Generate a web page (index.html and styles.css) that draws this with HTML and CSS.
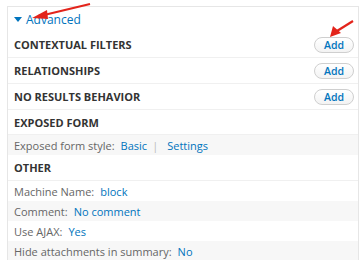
FILE: index.html
```html
<!DOCTYPE html>
<html lang="en">
<head>
  <meta charset="UTF-8" />
  <title>Views advanced</title>
  <link rel="stylesheet" href="styles.css">
</head>
<body>

  <div class="panel">
    <div class="toggle">
      <span class="tri"></span>
      <a href="#">Advanced</a>
    </div>

    <div class="bucket">
      <span>CONTEXTUAL FILTERS</span>
      <button class="add">Add</button>
    </div>
    <div class="bucket">
      <span>RELATIONSHIPS</span>
      <button class="add">Add</button>
    </div>
    <div class="bucket">
      <span>NO RESULTS BEHAVIOR</span>
      <button class="add">Add</button>
    </div>
    <div class="bucket short">
      <span>EXPOSED FORM</span>
    </div>
    <div class="row even">
      <span class="label">Exposed form style:</span><a href="#">Basic</a><span class="sep">|</span><a href="#">Settings</a>
    </div>
    <div class="bucket">
      <span>OTHER</span>
    </div>
    <div class="row"><span class="label">Machine Name:</span><a href="#">block</a></div>
    <div class="row even"><span class="label">Comment:</span><a href="#">No comment</a></div>
    <div class="row"><span class="label">Use AJAX:</span><a href="#">Yes</a></div>
    <div class="row even"><span class="label">Hide attachments in summary:</span><a href="#">No</a></div>
  </div>

  <svg class="arrows" width="364" height="260" viewBox="0 0 364 260">
    <line x1="90" y1="4" x2="44" y2="15" stroke="#e3241b" stroke-width="2.2"/>
    <polygon points="32,18 47,10 48,19" fill="#e3241b"/>
    <line x1="353" y1="21" x2="337" y2="31" stroke="#e3241b" stroke-width="2.2"/>
    <polygon points="330,37 333,26 341,33" fill="#e3241b"/>
  </svg>

</body>
</html>
```

FILE: styles.css
```css
body {
  margin: 0;
  background: #fff;
  font-family: "Open Sans", "DejaVu Sans", sans-serif;
  color: #666;
}

.panel {
  width: 350px;
  margin: 6px 0 0 7px;
  border: 1px solid #e6e6e6;
  border-bottom: none;
}

a {
  color: #0074bd;
  text-decoration: none;
}

.toggle {
  height: 25px;
  display: flex;
  align-items: center;
  padding-left: 6px;
  font-size: 12px;
}

.tri {
  width: 0;
  height: 0;
  border-left: 4px solid transparent;
  border-right: 4px solid transparent;
  border-top: 5px solid #0074bd;
  margin-right: 4px;
}

.bucket {
  height: 25px;
  border-bottom: 1px solid #f0f0f0;
  display: flex;
  align-items: center;
  justify-content: space-between;
  padding: 0 4px 0 6px;
  font-size: 11px;
  font-weight: bold;
  color: #333;
}

.bucket.short {
  height: 24px;
}

.add {
  width: 40px;
  height: 16px;
  padding: 0;
  border: 1px solid #cfcfcf;
  border-radius: 9px;
  background: linear-gradient(#fff, #f3f3f3);
  color: #0074bd;
  font-family: "Open Sans", "DejaVu Sans", sans-serif;
  font-size: 10.5px;
  font-weight: 600;
}

.row {
  height: 20px;
  display: flex;
  align-items: center;
  padding-left: 6px;
  font-size: 11px;
}

.row.even {
  background: #f7f7f7;
}

.label {
  margin-right: 6px;
}

.sep {
  color: #bbb;
  margin: 0 9px 0 5px;
}

.arrows {
  position: absolute;
  left: 0;
  top: 0;
}
```
